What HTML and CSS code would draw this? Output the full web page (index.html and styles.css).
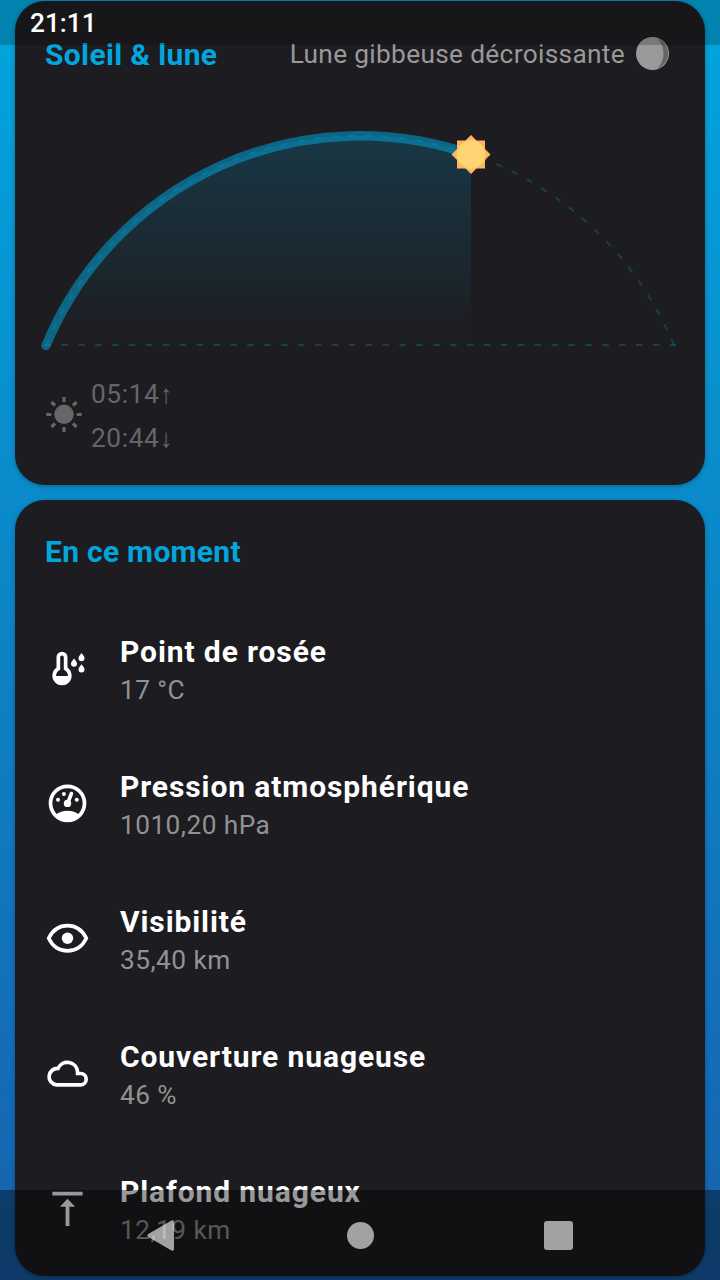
FILE: index.html
```html
<!DOCTYPE html>
<html lang="fr">
<head>
<meta charset="utf-8">
<title>Météo</title>
<link rel="stylesheet" href="styles.css">
</head>
<body>
<div class="screen">
  <main class="content">
    <section class="card astro">
      <header class="astro-head">
        <h2 class="card-title">Soleil &amp; lune</h2>
        <span class="phase">Lune gibbeuse décroissante</span>
        <svg class="moon" viewBox="0 0 45 45"><circle cx="22.500" cy="22.500" r="16.500" fill="#999"/><path d="M27.500 7.500C34.500 10 38 16 38 22.500S34.500 35 27.500 37.500C31.500 33.500 33.500 28.500 33.500 22.500S31.500 11.500 27.500 7.500z" fill="#666"/></svg>
      </header>
      <svg class="arc" viewBox="15 86 690 286">
        <defs>
          <linearGradient id="day" x1="0" y1="136" x2="0" y2="345" gradientUnits="userSpaceOnUse">
            <stop offset="0" stop-color="#02a5dc" stop-opacity=".2"/>
            <stop offset="1" stop-color="#02a5dc" stop-opacity="0"/>
          </linearGradient>
        </defs>
        <path d="M46 345.500A339.750 339.750 0 0 1 471 154.500V345.500z" fill="url(#day)"/>
        <g fill="none" stroke="#02a5dc">
          <path class="dash" d="M46 345.500A339.750 339.750 0 0 1 674 345.500"/>
          <path class="dash" d="M44.500 345H676"/>
          <path class="elapsed" d="M46 345.500A339.750 339.750 0 0 1 471 154.500"/>
        </g>
        <g transform="translate(471 154.500)">
          <rect x="-14" y="-14" width="28" height="28" fill="#ffb55e"/>
          <path d="M0-19.500 19.500 0 0 19.500-19.500 0z" fill="#ffb55e"/>
          <circle r="14.200" fill="#ffd574"/>
        </g>
      </svg>
      <div class="times">
        <svg class="icon" viewBox="0 0 45 45"><circle cx="23" cy="20.300" r="9.700" fill="currentColor"/><g stroke="currentColor" stroke-width="3.200"><path d="M23 3v5M23 33v5M5.300 20.500h5M35.700 20.500h5M10.500 8l3.500 3.500M32 29.500l3.500 3.500M10.500 33l3.500-3.500M32 11.500l3.500-3.500"/></g></svg>
        <div><div class="time">05:14<span class="arrow">↑</span></div><div class="time">20:44<span class="arrow">↓</span></div></div>
      </div>
    </section>

    <section class="card now">
      <h2 class="card-title">En ce moment</h2>
      <ul class="list">
        <li class="row">
          <svg class="icon" viewBox="0 -.5 45 45"><path d="M13.350 23.200V11.750a3.650 3.650 0 0 1 7.300 0V23.200a7.800 7.800 0 1 1-7.300 0z" fill="none" stroke="currentColor" stroke-width="3.700"/><path d="M8 30.400h18a9 9 0 0 1-18 0z" fill="currentColor"/><g fill="currentColor"><path d="M29 13c2 2.600 3 3.500 3 5.200a3 3 0 0 1-6 0c0-1.700 1-2.600 3-5.200z"/><path d="M36.500 7.500c2 2.600 3 3.500 3 5.200a3 3 0 0 1-6 0c0-1.700 1-2.600 3-5.200z"/><path d="M36.500 18.800c2 2.600 3 3.500 3 5.200a3 3 0 0 1-6 0c0-1.700 1-2.600 3-5.200z"/></g></svg>
          <div><div class="label">Point de rosée</div><div class="value">17 °C</div></div>
        </li>
        <li class="row">
          <svg class="icon" viewBox="0 -.5 45 45"><circle cx="22.500" cy="22.800" r="17" fill="none" stroke="currentColor" stroke-width="3.700"/><g fill="currentColor"><circle cx="13" cy="19.200" r="2"/><circle cx="18.900" cy="13.500" r="2"/><circle cx="31.800" cy="19.200" r="2"/><circle cx="22.500" cy="22.900" r="3.700"/><path d="M10.500 34.500C14 31.500 18 30.200 22.500 30.200s8.500 1.300 12 4.300c-3 4-7 5.500-12 5.500s-9-1.500-12-5.500z"/></g><path d="M23 22 26.400 13" stroke="currentColor" stroke-width="3.600" stroke-linecap="round"/></svg>
          <div><div class="label">Pression atmosphérique</div><div class="value">1010,20 hPa</div></div>
        </li>
        <li class="row">
          <svg class="icon" viewBox="0 -.5 45 45"><path d="M3.700 22.700C7.500 14.800 14.300 10.100 22.500 10.100s15 4.700 18.800 12.600C37.500 30.600 30.700 35.300 22.500 35.300S7.500 30.600 3.700 22.700z" fill="none" stroke="currentColor" stroke-width="3.700"/><circle cx="22.500" cy="22.800" r="5.700" fill="currentColor"/></svg>
          <div><div class="label">Visibilité</div><div class="value">35,40 km</div></div>
        </li>
        <li class="row">
          <svg class="icon" viewBox="0 -.5 45 45"><path d="M11.700 34.400H35.500a5.700 5.700 0 0 0 0-11.400H32.600V21.500A10.300 10.300 0 0 0 12.900 18 8.200 8.200 0 0 0 11.700 34.400z" fill="none" stroke="currentColor" stroke-width="3.700"/></svg>
          <div><div class="label">Couverture nuageuse</div><div class="value">46 %</div></div>
        </li>
        <li class="row">
          <svg class="icon" viewBox="0 -.5 45 45"><path d="M7.400 6.200h30.200V10H7.400zM22.500 13.300l7.600 7.900h-5.700v19.300h-3.800V21.200h-5.700z" fill="currentColor"/></svg>
          <div><div class="label">Plafond nuageux</div><div class="value">12,19 km</div></div>
        </li>
      </ul>
    </section>
  </main>

  <div class="status-bar">21:11</div>
  <nav class="nav-bar">
    <svg viewBox="0 0 720 90"><g fill="#fff" fill-opacity=".61"><path d="M148.300 44 171.500 30.600Q174 29.500 174 32.200V58.800Q174 61.500 171.500 60.400L148.300 47Q146.300 45.500 148.300 44z"/><circle cx="360.500" cy="45.500" r="13.500"/><rect x="544" y="31" width="29" height="29" rx="3"/></g></svg>
  </nav>
</div>
</body>
</html>
```

FILE: styles.css
```css
* { box-sizing: border-box; }

body {
  margin: 0;
  font-family: Roboto, "Liberation Sans", sans-serif;
  color: #fff;
}

svg { display: block; flex: none; }

.screen {
  position: relative;
  width: 720px;
  height: 1280px;
  overflow: hidden;
  background: linear-gradient(#02a5dd, #1761ae);
}

.content {
  display: flex;
  flex-direction: column;
  gap: 15px;
  padding: 1px 15px 0;
}

.card {
  border-radius: 30px;
  background: #1d1c20;
  box-shadow: 0 1px 4px rgba(0, 0, 0, .3);
}

.astro { height: 484px; }
.now { height: 776px; padding-top: 29px; }

.card-title {
  margin: 0;
  font-size: 30px;
  line-height: 45px;
  font-weight: 700;
  letter-spacing: .28px;
  color: #02a5dc;
}

.now .card-title { padding-left: 30px; }

.astro-head {
  display: flex;
  align-items: center;
  height: 85px;
  padding: 20px 30px 0;
}

.astro-head .card-title {
  padding-top: 2px;
  letter-spacing: .35px;
}

.phase {
  margin-left: auto;
  margin-right: 5px;
  font-size: 26.25px;
  letter-spacing: .33px;
  color: #999;
}

.moon { width: 45px; height: 45px; }
.arc { width: 690px; height: 286px; }

.dash {
  stroke-width: 1.9px;
  stroke-opacity: .27;
  stroke-dasharray: 6.5 10.4;
}

.elapsed {
  stroke-width: 9.4px;
  stroke-linecap: round;
  stroke-opacity: .53;
}

.times {
  display: flex;
  align-items: center;
  padding-left: 26px;
  gap: 5px;
  color: #666;
}

.time {
  height: 44px;
  font-size: 26.25px;
  line-height: 44px;
  letter-spacing: .6px;
}

.arrow { font-size: 26.25px; }

.icon { width: 45px; height: 45px; }

.list {
  margin: 26px 0 0;
  padding: 0;
  list-style: none;
}

.row {
  display: flex;
  align-items: center;
  gap: 30px;
  height: 135px;
  padding-left: 30px;
}

.label {
  font-size: 30px;
  line-height: 45px;
  font-weight: 700;
  letter-spacing: .9px;
}

.value {
  font-size: 26.25px;
  line-height: 32px;
  letter-spacing: .45px;
  color: #929292;
}

.status-bar {
  position: absolute;
  inset: 0 0 auto;
  height: 45px;
  padding-left: 30px;
  background: rgba(0, 0, 0, .2);
  font-size: 26.25px;
  line-height: 46px;
  font-weight: 500;
}

.nav-bar {
  position: absolute;
  inset: auto 0 0;
  height: 90px;
  background: rgba(0, 0, 0, .4);
}
```
